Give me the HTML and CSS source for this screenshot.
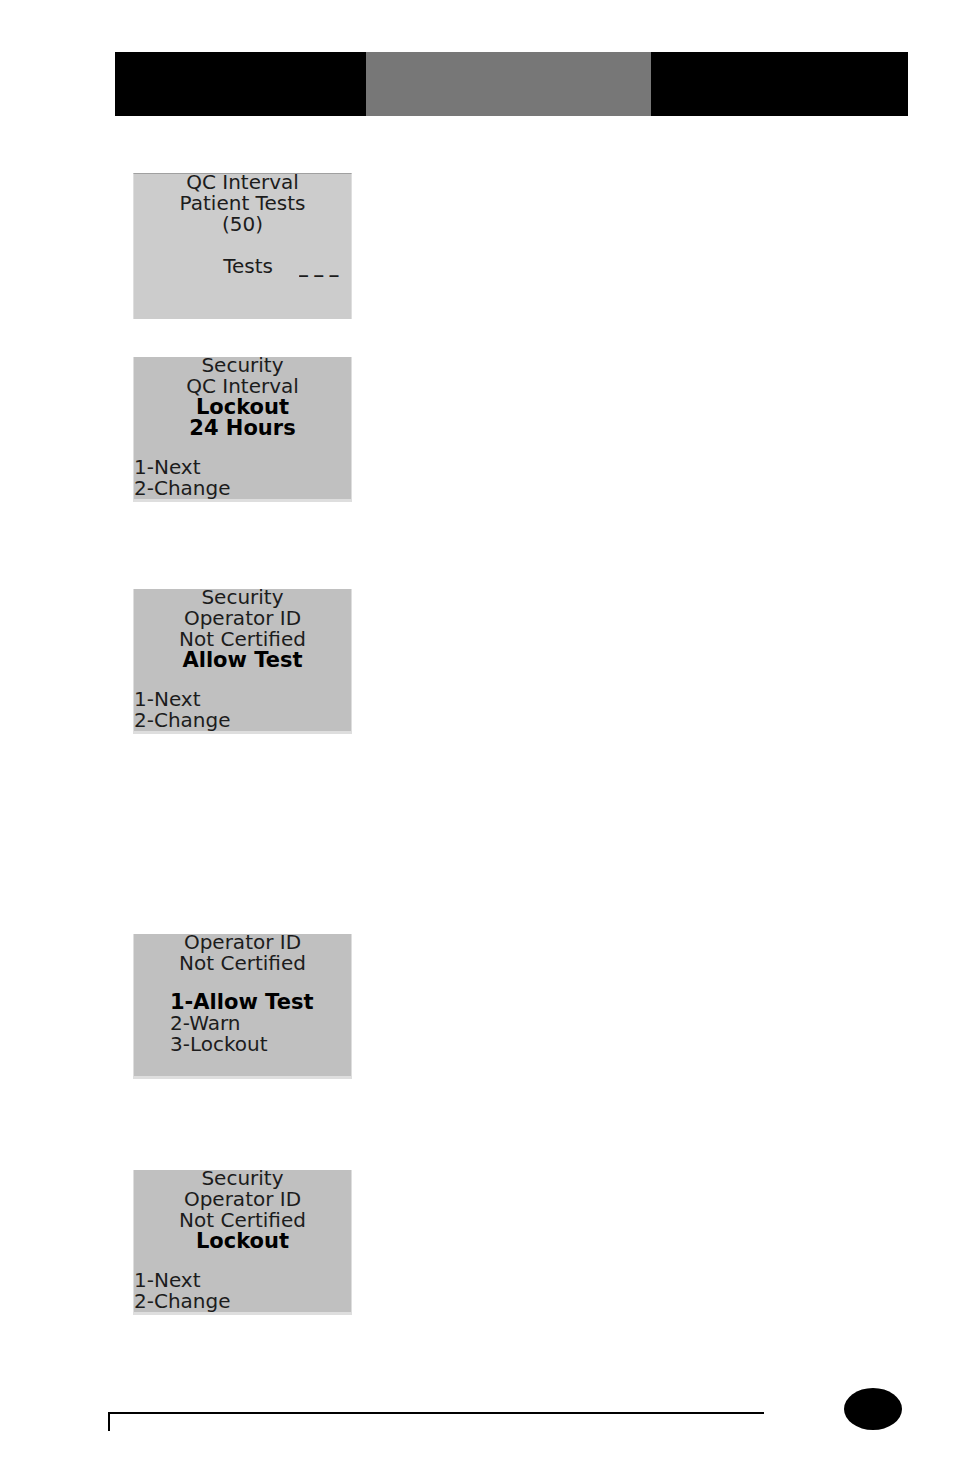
FILE: index.html
```html
<!DOCTYPE html>
<html lang="en">
<head>
  <meta charset="UTF-8">
  <title>QC Interval and Operator ID</title>
  <link rel="stylesheet" href="styles.css">
</head>
<body>
  <header class="banner">
    <div class="banner-side"></div>
    <div class="banner-middle"></div>
    <div class="banner-end"></div>
  </header>

  <main class="screens">
    <form class="screen entry">
      <p>QC Interval</p>
      <p>Patient Tests</p>
      <p>(50)</p>
      <div class="field">
        <label for="tests">Tests</label>
        <input type="text" id="tests" value="_ _ _">
      </div>
    </form>

    <section class="screen interval">
      <p>Security</p>
      <p>QC Interval</p>
      <p><strong>Lockout</strong></p>
      <p><strong>24 Hours</strong></p>
      <ul class="choices">
        <li>1-Next</li>
        <li>2-Change</li>
      </ul>
    </section>

    <section class="screen operator">
      <p>Security</p>
      <p>Operator ID</p>
      <p>Not Certified</p>
      <p><strong>Allow Test</strong></p>
      <ul class="choices">
        <li>1-Next</li>
        <li>2-Change</li>
      </ul>
    </section>

    <section class="screen options">
      <p>Operator ID</p>
      <p>Not Certified</p>
      <ul class="choices indented">
        <li><strong>1-Allow Test</strong></li>
        <li>2-Warn</li>
        <li>3-Lockout</li>
      </ul>
    </section>

    <section class="screen result">
      <p>Security</p>
      <p>Operator ID</p>
      <p>Not Certified</p>
      <p><strong>Lockout</strong></p>
      <ul class="choices">
        <li>1-Next</li>
        <li>2-Change</li>
      </ul>
    </section>
  </main>

  <footer class="footer">
    <div class="rule"></div>
    <div class="page-mark"></div>
  </footer>
</body>
</html>
```

FILE: styles.css
```css
* {
  box-sizing: border-box;
}
body {
  margin: 0;
  padding: 52px 46px 44px 108px;
  background: #fff;
  color: #1c1c1c;
  font-family: "DejaVu Sans", sans-serif;
  font-size: 20px;
  line-height: 21px;
}
strong {
  color: #000;
  font-size: 21px;
}
.banner {
  display: flex;
  height: 64px;
  margin-left: 7px;
}
.banner-side {
  flex: 251;
  background: #000;
}
.banner-middle {
  flex: 285;
  background: #777;
}
.banner-end {
  flex: 257;
  background: #000;
}

/* device screens */
.screens {
  display: flex;
  flex-direction: column;
  align-items: flex-start;
  padding: 57px 0 0 25px;
}
.screen {
  width: 219px;
  min-height: 145px;
  background: #c0c0c0;
  border: solid #dedede;
  border-width: 0 1px 3px;
  text-align: center;
}
.screen p {
  margin: 0;
}
.screen p:first-child {
  margin-top: -2px;
}
.entry {
  min-height: 146px;
  background: #ccc;
  border-top: 1px solid #a0a0a0;
  border-bottom: 0;
}
.interval {
  margin-top: 38px;
}
.operator {
  margin-top: 87px;
}
.options {
  margin-top: 200px;
}
.result {
  margin-top: 91px;
}
.field {
  display: flex;
  justify-content: flex-end;
  align-items: center;
  gap: 26px;
  margin-top: 18px;
  padding-right: 8px;
}
.field input {
  width: 44px;
  height: 26px;
  padding: 0;
  border: 0;
  background: none;
  color: inherit;
  font: inherit;
  font-size: 18px;
  font-weight: bold;
}
.choices {
  margin: 18px 0 0;
  padding: 0;
  list-style: none;
  text-align: left;
}
.indented {
  padding-left: 36px;
}

.footer {
  display: flex;
  align-items: flex-start;
  gap: 80px;
  margin-top: 73px;
  padding-right: 6px;
}
.rule {
  flex: 1;
  height: 19px;
  margin-top: 24px;
  border-top: 2px solid #000;
  border-left: 2px solid #000;
}
.page-mark {
  width: 58px;
  height: 42px;
  border-radius: 50%;
  background: #000;
}
```
